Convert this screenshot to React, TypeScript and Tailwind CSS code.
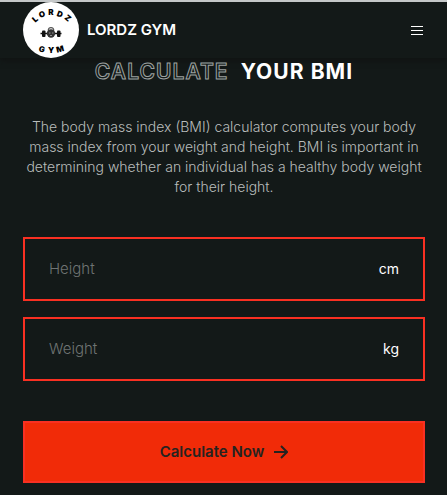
import { useState } from "react";

type Glyph = { char: string; x: number; y: number; angle: number };

const LOGO_LETTERS: Glyph[] = [
  { char: "L", x: 12, y: 17, angle: -42 },
  { char: "O", x: 19, y: 12, angle: -20 },
  { char: "R", x: 28, y: 10, angle: 0 },
  { char: "D", x: 37, y: 12, angle: 20 },
  { char: "Z", x: 45, y: 16, angle: 40 },
  { char: "G", x: 19, y: 47, angle: 14 },
  { char: "Y", x: 28, y: 48, angle: 0 },
  { char: "M", x: 37, y: 47, angle: -14 },
];

function Logo() {
  return (
    <svg viewBox="0 0 56 56" className="size-14 shrink-0" aria-hidden="true">
      <circle cx="28" cy="28" r="28" fill="#fff" />
      {LOGO_LETTERS.map(({ char, x, y, angle }) => (
        <text
          key={char}
          transform={`translate(${x} ${y}) rotate(${angle})`}
          textAnchor="middle"
          dominantBaseline="central"
          className="fill-black font-['Inter',sans-serif] text-[8px] font-black"
        >
          {char}
        </text>
      ))}
      <path d="M17.500 31.500h21" stroke="#111" strokeWidth="1.500" />
      <rect x="19" y="28.500" width="3.500" height="6.500" rx="1" fill="#111" />
      <rect x="34" y="28.500" width="3.500" height="6.500" rx="1" fill="#111" />
      <path d="M25.500 29c-1.500-4.500 6.500-4.500 5 0" fill="none" stroke="#555" strokeWidth="1.200" />
      <circle cx="28" cy="31.500" r="4.200" fill="#333" />
      <path d="M26 31h1.500M29 31h1.500M27 33.500h2" stroke="#aaa" strokeWidth=".8" />
    </svg>
  );
}

function Measure({ label, unit }: { label: string; unit: string }) {
  const [value, setValue] = useState("");
  return (
    <label className="flex h-16 items-center border-2 border-[#f93022] px-6">
      <input
        aria-label={label}
        placeholder={label}
        value={value}
        inputMode="decimal"
        onChange={(event) => setValue(event.target.value)}
        className="min-w-0 flex-1 bg-transparent text-[15px] font-light text-white outline-none placeholder:text-[#6f7473]"
      />
      <span className="text-sm text-white">{unit}</span>
    </label>
  );
}

export default function App() {
  return (
    <div className="min-h-screen bg-[#131918] font-['Inter',sans-serif] text-white">
      <header className="flex items-center border-t-2 border-[#c4c7c8] pr-[22px] pl-[23px] shadow-[0_2px_6px_#101212]">
        <Logo />
        <span className="ml-2 flex-1 text-[15px] font-semibold">LORDZ GYM</span>
        <button type="button" aria-label="Open menu" className="flex size-4 items-center justify-center">
          <svg viewBox="0 0 12 12" className="size-3" stroke="#fff" strokeWidth="1.100" aria-hidden="true">
            <path d="M0 2.500h12M0 6.500h12M0 10.500h12" />
          </svg>
        </button>
      </header>

      <main className="pr-[22px] pb-3 pl-[23px]">
        <h1 className="flex justify-center gap-3 text-[21px] leading-7 font-bold tracking-wider">
          <span className="font-semibold text-[#131918] [-webkit-text-stroke:1px_#9ca1a0]">CALCULATE</span>
          <span>YOUR BMI</span>
        </h1>
        <p className="mt-[31px] text-center text-sm leading-5 font-light text-[#b9bdbc]">
          The body mass index (BMI) calculator computes your body mass index from your weight and
          height. BMI is important in determining whether an individual has a healthy body weight
          for their height.
        </p>
        <form className="mt-10" onSubmit={(event) => event.preventDefault()}>
          <div className="flex flex-col gap-4">
            <Measure label="Height" unit="cm" />
            <Measure label="Weight" unit="kg" />
          </div>
          <button
            type="submit"
            className="mt-10 flex h-[62px] w-full items-center justify-center gap-2.5 border-2 border-[#f93022] bg-[#f12b08] text-[15px] font-semibold text-[#252320]"
          >
            Calculate Now
            <svg viewBox="0 0 14 14" className="size-3.5" fill="none" stroke="currentColor" strokeWidth="2" aria-hidden="true">
              <path d="M0 7h13M7 1l6 6-6 6" />
            </svg>
          </button>
        </form>
      </main>
    </div>
  );
}
